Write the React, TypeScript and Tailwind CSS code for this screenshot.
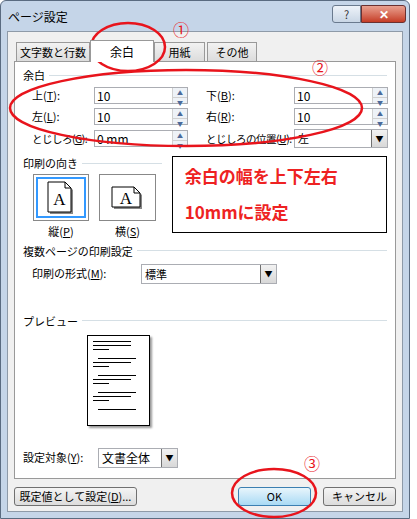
import React from "react";

const F = { fontFamily: '"Noto Sans CJK JP", "Noto Sans", sans-serif' };

function Spin() {
  return (
    <div className="flex flex-col w-[15px] h-full border-l border-[#d0d0d0] bg-[#eef2f7]">
      <div className="flex-1 flex items-center justify-center text-[6px] text-[#4a6a9a] border-b border-[#d0d0d0]">▲</div>
      <div className="flex-1 flex items-center justify-center text-[6px] text-[#4a6a9a]">▼</div>
    </div>
  );
}

function NumInput({ v, w = 94 }: { v: string; w?: number }) {
  return (
    <div className="flex h-[17px] border border-[#abadb3] bg-white" style={{ width: w }}>
      <div className="flex-1 pl-[2px] text-[12px] leading-[15px]">{v}</div>
      <Spin />
    </div>
  );
}

function DropBtn() {
  return (
    <div className="w-[16px] h-full border-l border-[#707070] bg-gradient-to-b from-[#f2f2f2] to-[#d8d8d8] flex items-center justify-center text-[8px]">▼</div>
  );
}

function Group({ t }: { t: string }) {
  return (
    <div className="flex items-center gap-[4px]">
      <span className="text-[11px] leading-[14px] whitespace-nowrap">{t}</span>
      <div className="flex-1 h-px bg-[#d5dfe5]" />
    </div>
  );
}

function PageIcon({ land }: { land?: boolean }) {
  return (
    <svg width={land ? 34 : 28} height={land ? 24 : 34} viewBox={land ? "0 0 34 24" : "0 0 28 34"}>
      {land ? (
        <>
          <path d="M3 3 H25 L31 9 V23 H3 Z" fill="#888" />
          <path d="M1 1 H23 L29 7 V21 H1 Z" fill="#fff" stroke="#000" />
          <path d="M23 1 V7 H29" fill="none" stroke="#000" />
          <text x="15" y="18" fontSize="17" fontFamily="Liberation Serif" textAnchor="middle">A</text>
        </>
      ) : (
        <>
          <path d="M3 3 H20 L26 9 V33 H3 Z" fill="#888" />
          <path d="M1 1 H18 L24 7 V31 H1 Z" fill="#fff" stroke="#000" />
          <path d="M18 1 V7 H24" fill="none" stroke="#000" />
          <text x="12.5" y="24" fontSize="17" fontFamily="Liberation Serif" textAnchor="middle">A</text>
        </>
      )}
    </svg>
  );
}

export default function App() {
  const lines = [
    [5, 38], [5, 38], [5, 16], null, [10, 38], [5, 38], [5, 16], null, [10, 38], [5, 38], [5, 16], null, [10, 38], [5, 38], [5, 16], null, [10, 38],
  ];
  return (
    <div className="relative w-[417px] h-[519px] bg-[#ffffff] overflow-hidden text-black text-[11px]" style={F}>
      <div className="absolute left-0 top-0 w-[410px] h-[519px] bg-[#c5d5e8] border border-[#5a6b80] rounded-t-[6px] flex flex-col">
        <div className="h-[30px] flex items-start pl-[7px] pt-[7px] relative">
          <span className="text-[12px]">ページ設定</span>
          <div className="absolute right-[3px] top-[4px] flex">
            <div className="w-[29px] h-[18px] border border-[#6a7a8e] rounded-l-[3px] bg-gradient-to-b from-[#eef3f9] to-[#c9d6e5] flex items-center justify-center text-[11px] text-[#333]">?</div>
            <div className="w-[45px] h-[18px] border border-[#6a3030] rounded-r-[3px] bg-gradient-to-b from-[#e8a090] to-[#c43a24] flex items-center justify-center text-white text-[12px] font-bold">✕</div>
          </div>
        </div>
        <div className="mx-[6px] flex-1 bg-[#f0f0f0] border border-[#8e9aa8] px-[6px] pt-[6px] flex flex-col whitespace-nowrap">
          <div className="flex items-end h-[23px] pl-[2px]">
            <div className="h-[19px] w-[74px] border border-[#999] border-b-0 bg-gradient-to-b from-[#f2f2f2] to-[#dcdcdc] flex items-center justify-center">文字数と行数</div>
            <div className="h-[22px] w-[64px] border border-[#999] border-b-0 bg-white text-[12px] flex items-center justify-center -mb-px z-10">余白</div>
            <div className="h-[19px] w-[51px] border border-[#999] border-b-0 bg-gradient-to-b from-[#f2f2f2] to-[#dcdcdc] flex items-center justify-center">用紙</div>
            <div className="h-[19px] w-[50px] ml-[2px] border border-[#999] border-b-0 bg-gradient-to-b from-[#f2f2f2] to-[#dcdcdc] flex items-center justify-center">その他</div>
          </div>
          <div className="h-[418px] bg-white border border-[#999] px-[8px] pt-[6px] flex flex-col">
            <Group t="余白" />
            <div className="grid grid-cols-[71px_104px_96px_94px] gap-y-[4px] mt-[5px] items-center">
              <span className="pl-[9px]">上(<u>T</u>):</span><NumInput v="10" />
              <span className="pl-[8px]">下(<u>B</u>):</span><NumInput v="10" />
              <span className="pl-[9px]">左(<u>L</u>):</span><NumInput v="10" />
              <span className="pl-[8px]">右(<u>R</u>):</span><NumInput v="10" />
              <span className="pl-[9px] text-[10.5px] tracking-[-0.5px]">とじしろ(<u>G</u>):</span><NumInput v="0 mm" />
              <span className="pl-[8px] text-[10.5px] tracking-[-0.5px]">とじしろの位置(<u>U</u>):</span>
              <div className="flex h-[19px] border border-[#abadb3] bg-white"><div className="flex-1 pl-[3px] leading-[17px]">左</div><DropBtn /></div>
            </div>
            <div className="flex mt-[8px] gap-[10px]">
              <div className="w-[142px] flex flex-col">
                <Group t="印刷の向き" />
                <div className="flex gap-[10px] ml-[10px] mt-[4px]">
                  <div className="flex flex-col items-center">
                    <div className="w-[56px] h-[47px] border border-[#888] p-[2px]"><div className="w-full h-full border-2 border-[#3399ff] flex items-center justify-center"><PageIcon /></div></div>
                    <span className="mt-[2px]">縦(<u>P</u>)</span>
                  </div>
                  <div className="flex flex-col items-center">
                    <div className="w-[57px] h-[47px] border border-[#888] flex items-center justify-center"><PageIcon land /></div>
                    <span className="mt-[2px]">横(<u>S</u>)</span>
                  </div>
                </div>
              </div>
              <div className="w-[220px] h-[77px] border border-black bg-white text-[#ee2222] font-bold text-[17px] pl-[12px] pt-[1px] leading-[36px]">
                <div>余白の幅を上下左右</div>
                <div>10mmに設定</div>
              </div>
            </div>
            <div className="mt-[4px]"><Group t="複数ページの印刷設定" /></div>
            <div className="flex items-center mt-[6px]">
              <span className="pl-[9px] w-[118px]">印刷の形式(<u>M</u>):</span>
              <div className="flex w-[136px] h-[20px] border border-[#abadb3] bg-white"><div className="flex-1 pl-[3px] leading-[18px]">標準</div><DropBtn /></div>
            </div>
            <div className="mt-[30px]"><Group t="プレビュー" /></div>
            <div className="ml-[64px] mt-[7px] w-[63px] h-[91px] border border-black bg-white shadow-[2px_2px_2px_#999] pt-[5px] flex flex-col gap-[3px]">
              {lines.map((l, i) =>
                l ? <div key={i} className="h-px bg-black" style={{ marginLeft: l[0], width: l[1] }} /> : <div key={i} className="h-[2px]" />
              )}
            </div>
            <div className="flex items-center mt-[22px]">
              <span className="w-[75px]">設定対象(<u>Y</u>):</span>
              <div className="flex w-[80px] h-[20px] border border-[#abadb3] bg-white"><div className="flex-1 pl-[3px] leading-[18px] text-[12px]">文書全体</div><DropBtn /></div>
            </div>
          </div>
          <div className="flex items-center mt-[8px]">
            <div className="w-[123px] h-[19px] border border-[#707070] rounded-[3px] bg-gradient-to-b from-[#f4f4f4] to-[#dcdcdc] flex items-center justify-center">既定値として設定(<u>D</u>)...</div>
            <div className="ml-auto w-[73px] h-[19px] border border-[#3c7fb1] rounded-[3px] bg-gradient-to-b from-[#e8f5fc] to-[#a9daf4] flex items-center justify-center">OK</div>
            <div className="ml-[12px] w-[73px] h-[19px] border border-[#707070] rounded-[3px] bg-gradient-to-b from-[#f4f4f4] to-[#dcdcdc] flex items-center justify-center">キャンセル</div>
          </div>
        </div>
        <div className="h-[6px]" />
      </div>
      <svg className="absolute left-0 top-0 pointer-events-none" width="417" height="519">
        <g fill="none" stroke="#e8141c" strokeWidth="2.5">
          <ellipse cx="128" cy="47" rx="37" ry="24" />
          <ellipse cx="186" cy="108" rx="176" ry="38" />
          <ellipse cx="274" cy="493" rx="42" ry="24" />
        </g>
        <g fill="#e8141c" fontSize="16" fontFamily="Noto Sans CJK JP" textAnchor="middle">
          <text x="181" y="36">①</text>
          <text x="320" y="74">②</text>
          <text x="312" y="470">③</text>
        </g>
      </svg>
    </div>
  );
}
